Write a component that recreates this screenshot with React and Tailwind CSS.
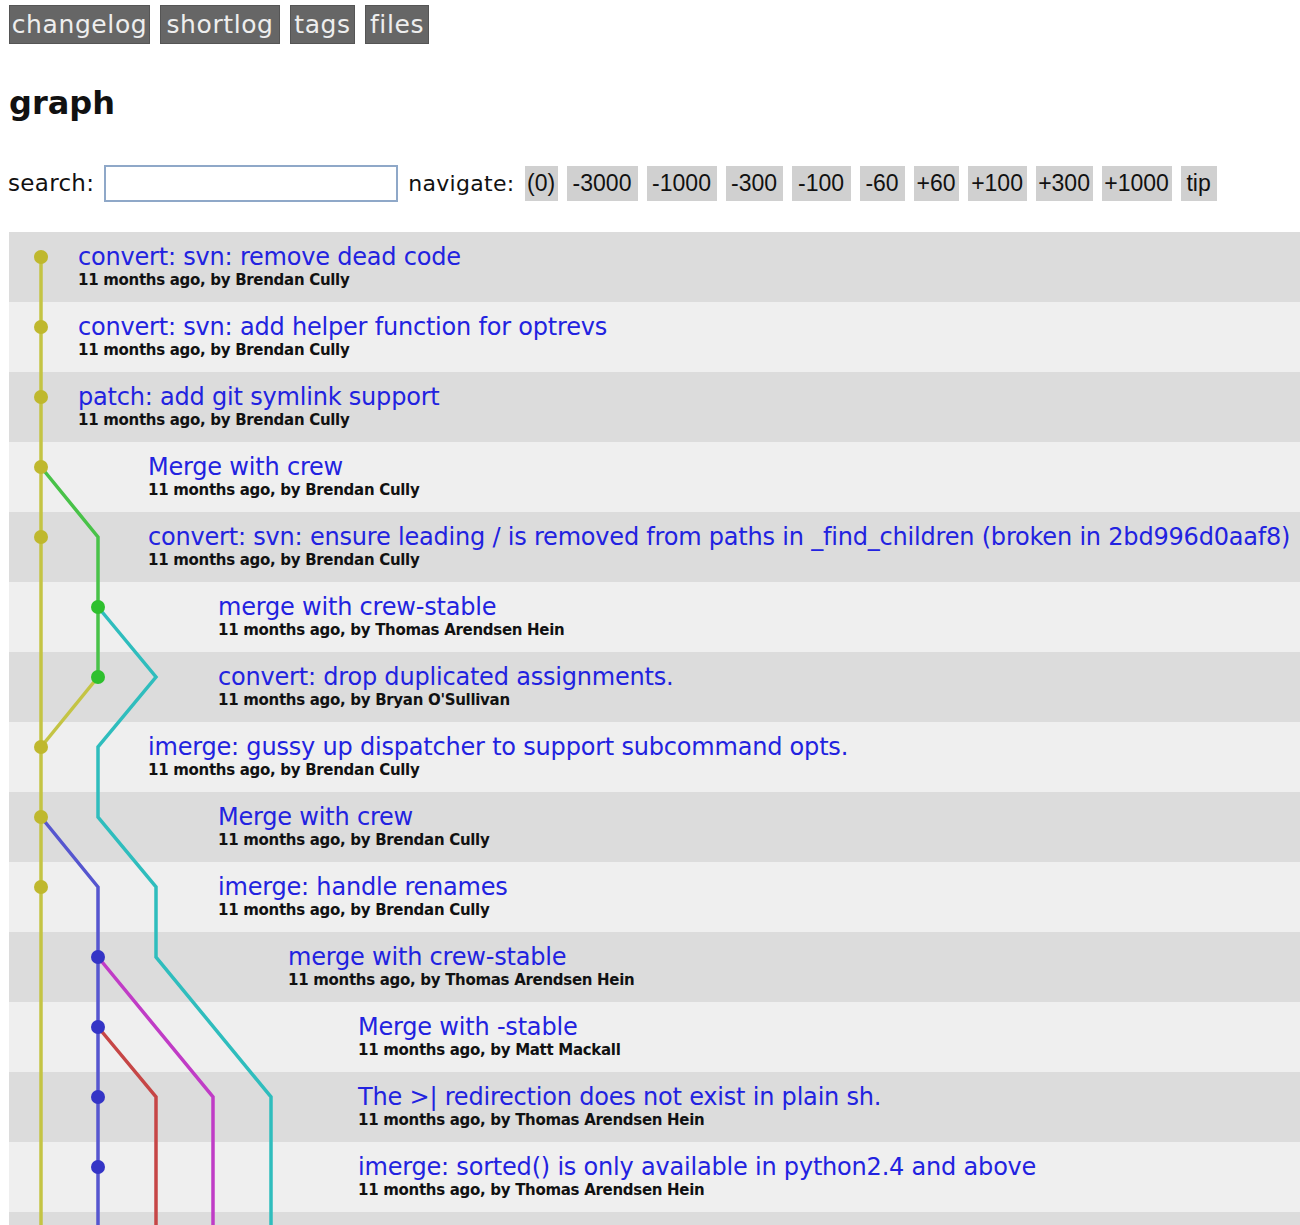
import React from "react";

const rows = [
  { t: "convert: svn: remove dead code", a: "Brendan Cully", i: 69 },
  { t: "convert: svn: add helper function for optrevs", a: "Brendan Cully", i: 69 },
  { t: "patch: add git symlink support", a: "Brendan Cully", i: 69 },
  { t: "Merge with crew", a: "Brendan Cully", i: 139 },
  { t: "convert: svn: ensure leading / is removed from paths in _find_children (broken in 2bd996d0aaf8)", a: "Brendan Cully", i: 139 },
  { t: "merge with crew-stable", a: "Thomas Arendsen Hein", i: 209 },
  { t: "convert: drop duplicated assignments.", a: "Bryan O'Sullivan", i: 209 },
  { t: "imerge: gussy up dispatcher to support subcommand opts.", a: "Brendan Cully", i: 139 },
  { t: "Merge with crew", a: "Brendan Cully", i: 209 },
  { t: "imerge: handle renames", a: "Brendan Cully", i: 209 },
  { t: "merge with crew-stable", a: "Thomas Arendsen Hein", i: 279 },
  { t: "Merge with -stable", a: "Matt Mackall", i: 349 },
  { t: "The >| redirection does not exist in plain sh.", a: "Thomas Arendsen Hein", i: 349 },
  { t: "imerge: sorted() is only available in python2.4 and above", a: "Thomas Arendsen Hein", i: 349 },
];

const C0 = 32, C1 = 89, C2 = 147, C3 = 204, C4 = 262;
const ny = (i) => 25 + 70 * (i - 1);

const Y = "#c4c444", YN = "#bfb82e";
const G = "#48c248", GN = "#2ec02e";
const CY = "#2fbdbd";
const B = "#5656cf", BN = "#3434c6";
const M = "#c03cc6";
const R = "#c64646";

const lines = [
  { c: Y, p: [[C0, ny(1)], [C0, 1060]] },
  { c: G, p: [[C0, ny(4)], [C1, ny(5)], [C1, ny(7)]] },
  { c: Y, p: [[C1, ny(7)], [C0, ny(8)]] },
  { c: CY, p: [[C1, ny(6)], [C2, ny(7)], [C1, ny(8)], [C1, ny(9)], [C2, ny(10)], [C2, ny(11)], [C4, ny(13)], [C4, 1060]] },
  { c: B, p: [[C0, ny(9)], [C1, ny(10)], [C1, 1060]] },
  { c: M, p: [[C1, ny(11)], [C3, ny(13)], [C3, 1060]] },
  { c: R, p: [[C1, ny(12)], [C2, ny(13)], [C2, 1060]] },
];

const nodes = [
  [C0, 1, YN], [C0, 2, YN], [C0, 3, YN], [C0, 4, YN], [C0, 5, YN],
  [C1, 6, GN], [C1, 7, GN],
  [C0, 8, YN], [C0, 9, YN], [C0, 10, YN],
  [C1, 11, BN], [C1, 12, BN], [C1, 13, BN], [C1, 14, BN],
];

const navs = [
  { n: "(0)", w: "w-[33px]" },
  { n: "-3000", w: "w-[71px]" },
  { n: "-1000", w: "w-[70px]" },
  { n: "-300", w: "w-[57px]" },
  { n: "-100", w: "w-[59px]" },
  { n: "-60", w: "w-[45px]" },
  { n: "+60", w: "w-[45px]" },
  { n: "+100", w: "w-[59px]" },
  { n: "+300", w: "w-[57px]" },
  { n: "+1000", w: "w-[70px]" },
  { n: "tip", w: "w-[36px]" },
];

const tabs = [
  { n: "changelog", w: "w-[141px]" },
  { n: "shortlog", w: "w-[120px]" },
  { n: "tags", w: "w-[65px]" },
  { n: "files", w: "w-[64px]" },
];

export default function App() {
  return (
    <div className="min-h-[1225px] bg-white pl-[9px] pt-[5px] font-['DejaVu_Sans',sans-serif] overflow-hidden">
      <div className="flex gap-[10px]">
        {tabs.map((b) => (
          <a key={b.n} className={`${b.w} h-[39px] flex items-center justify-center bg-[#666] border border-[#555] text-[#eee] text-[25px] leading-none tracking-[0.6px]`}>
            {b.n}
          </a>
        ))}
      </div>
      <h2 className="mt-[40px] text-[32px] leading-[38px] font-bold text-[#111]">graph</h2>
      <div className="mt-[43px] flex items-center h-[37px] text-[23px] text-[#111]">
        <span className="-ml-[1px] tracking-[0.3px]">search:</span>
        <input className="ml-[10px] w-[294px] h-[37px] border-2 border-[#8fa8c8] bg-white outline-none" />
        <span className="ml-[10px] text-[22px] tracking-[0.3px]">navigate:</span>
        <div className="ml-[10px] flex gap-[9px]">
          {navs.map((b) => (
            <a key={b.n} className={`${b.w} h-[35px] flex items-center justify-center bg-[#d0d0d0] text-[#111] text-[23px] font-['Liberation_Sans',sans-serif]`}>
              {b.n}
            </a>
          ))}
        </div>
      </div>
      <div className="relative mt-[30px] h-[1000px]">
        <div className="flex flex-col">
          {rows.map((r, idx) => (
            <div key={idx} className={`h-[70px] pt-[11px] ${idx % 2 === 0 ? "bg-[#dcdcdc]" : "bg-[#efefef]"}`} style={{ paddingLeft: r.i }}>
              <div className="text-[24px] leading-[28px] text-[#2222e0] whitespace-nowrap tracking-[-0.2px]">{r.t}</div>
              <div className="text-[15px] leading-[18px] font-bold text-[#111] whitespace-nowrap tracking-[-0.3px]">11 months ago, by {r.a}</div>
            </div>
          ))}
          <div className="h-[70px] bg-[#dcdcdc]"></div>
        </div>
        <svg className="absolute left-0 top-0" width="300" height="1060">
          {lines.map((l, i) => (
            <polyline key={i} points={l.p.map((q) => q.join(",")).join(" ")} fill="none" stroke={l.c} strokeWidth="3.5" strokeLinejoin="miter" />
          ))}
          {nodes.map(([x, r, c], i) => (
            <circle key={i} cx={x} cy={ny(r)} r="7" fill={c} />
          ))}
        </svg>
      </div>
    </div>
  );
}
